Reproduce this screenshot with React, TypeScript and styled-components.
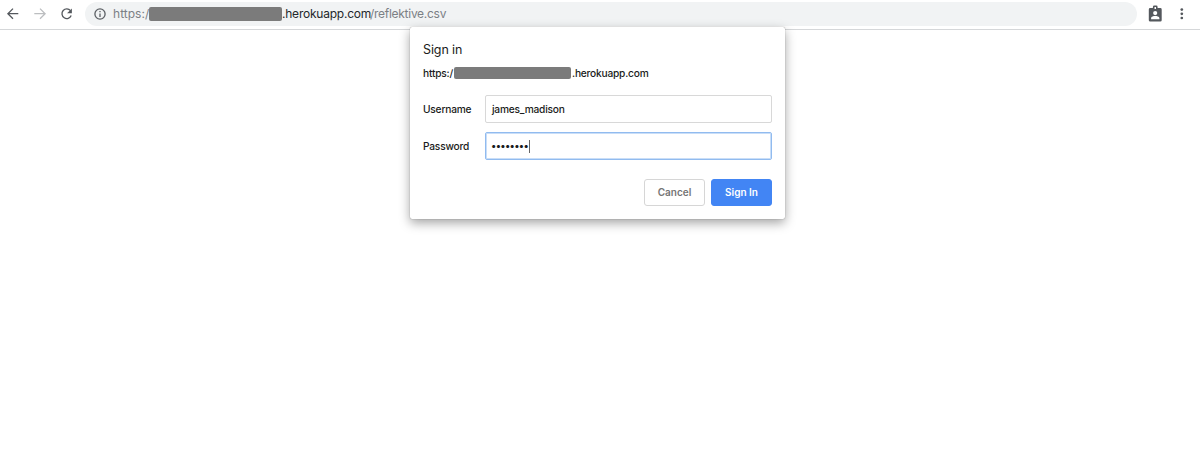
import React from "react";
import styled, { createGlobalStyle } from "styled-components";

const GlobalStyle = createGlobalStyle`
  * { box-sizing: border-box; }
  body { margin: 0; background: #fff; font-family: Inter, "Liberation Sans", sans-serif; }
`;

const Browser = styled.div`
  position: relative;
  height: 452px;
  overflow: hidden;
  background: #fff;
`;

const Toolbar = styled.header`
  display: flex;
  align-items: center;
  height: 30px;
  padding: 0 10px 3px 5px;
  border-bottom: 1px solid #d5d7d9;
`;

const NavButton = styled.span<{ $muted?: boolean }>`
  display: flex;
  width: 16px;
  height: 16px;
  margin: 1px 11px 0 0;
  color: ${(p) => (p.$muted ? "#bcbec0" : "#54585d")};
`;

const AddressBar = styled.div`
  display: flex;
  flex: 1;
  align-items: center;
  height: 24px;
  margin: 1px 10px 0 -1px;
  padding-left: 8px;
  border-radius: 12px;
  background: #f1f3f4;
  color: #5b5f64;
`;

const Address = styled.div`
  display: flex;
  align-items: center;
  margin-left: 6px;
  font-size: 12px;
  line-height: 16px;
  white-space: pre;
  color: #7c8085;
`;

const Scheme = styled.span`
  width: 36px;
  letter-spacing: 0.03px;
`;

const Host = styled.span`
  width: 88px;
  letter-spacing: -0.22px;
  color: #24272b;
`;

const Path = styled.span`
  letter-spacing: -0.28px;
`;

const Redacted = styled.span<{ $width: number; $height: number }>`
  width: ${(p) => p.$width}px;
  height: ${(p) => p.$height}px;
  border-radius: 2px;
  background: #7b7b7b;
`;

const Actions = styled.div`
  display: flex;
  align-items: center;
  gap: 10px;
  padding-top: 1px;
  color: #54585d;
`;

const Dialog = styled.section`
  position: absolute;
  left: 410px;
  top: 27px;
  width: 375px;
  height: 192px;
  padding: 14px 13px 13px;
  border-radius: 2px;
  background: #fff;
  color: #1a1c20;
  font-size: 10.2px;
  font-weight: 450;
  letter-spacing: -0.21px;
  box-shadow: 0 0 1px rgba(0, 0, 0, 0.5), 0 4px 11px rgba(0, 0, 0, 0.36);
`;

const Title = styled.h1`
  margin: 0;
  font-size: 12.5px;
  font-weight: 400;
  letter-spacing: -0.1px;
  line-height: 17px;
`;

const Origin = styled.div`
  display: flex;
  align-items: center;
  height: 14px;
  margin: 8px 0 15px;
`;

const OriginText = styled.span<{ $width?: number }>`
  width: ${(p) => (p.$width ? `${p.$width}px` : "auto")};
  padding-left: ${(p) => (p.$width ? 0 : 1)}px;
`;

const Field = styled.div`
  display: flex;
  align-items: center;
  height: 28px;
  margin-bottom: 9px;
`;

const Label = styled.span`
  width: 62px;
`;

const Input = styled.div<{ $focused?: boolean }>`
  display: flex;
  flex: 1;
  align-items: center;
  height: 28px;
  padding-left: ${(p) => (p.$focused ? 5 : 6)}px;
  border: 1px solid ${(p) => (p.$focused ? "#91bbef" : "#d8d8d8")};
  border-radius: 2px;
  box-shadow: ${(p) => (p.$focused ? "inset 0 0 0 1px #c9def8" : "none")};
`;

const Dots = styled.span`
  padding-bottom: 2px;
  font-size: 10px;
  letter-spacing: -0.7px;
`;

const Caret = styled.span`
  width: 1px;
  height: 13px;
  margin-left: 1px;
  background: #666;
`;

const Buttons = styled.div`
  display: flex;
  justify-content: flex-end;
  gap: 6px;
  margin-top: 19px;
`;

const Button = styled.button<{ $primary?: boolean }>`
  width: 61px;
  height: 27px;
  padding: 0 0 1px;
  border: 1px solid ${(p) => (p.$primary ? "#4285f4" : "#d6d6d6")};
  border-radius: 3px;
  background: ${(p) => (p.$primary ? "#4285f4" : "#fff")};
  color: ${(p) => (p.$primary ? "#fff" : "#757575")};
  font: 600 10px Inter, "Liberation Sans", sans-serif;
`;

const Icon = styled.svg`
  display: block;
  fill: none;
  stroke: currentColor;
  stroke-width: 1.3;
`;

const BackIcon = () => (
  <Icon width="16" height="16" viewBox="0 0 16 16">
    <path d="M13.3 7.7H3.2M8 2.6L2.9 7.7L8 12.8" />
  </Icon>
);

const ForwardIcon = () => (
  <Icon width="16" height="16" viewBox="0 0 16 16">
    <path d="M2.3 7.7H12.8M8 2.6L13.1 7.7L8 12.8" />
  </Icon>
);

const ReloadIcon = () => (
  <Icon width="16" height="16" viewBox="0.5 0 16 16">
    <path d="M12 4.7A4.8 4.8 0 1 0 12.7 9.6" />
    <path d="M13.4 2.4V7.2H8.6Z" fill="currentColor" stroke="none" />
  </Icon>
);

const InfoIcon = () => (
  <Icon width="14" height="14" viewBox="0 0 14 14">
    <circle cx="7" cy="7" r="5.1" />
    <path d="M7 6.4V10M7 4.1V5.3" />
  </Icon>
);

const BadgeIcon = () => (
  <Icon width="17" height="18" viewBox="0 0 17 18">
    <path
      fill="currentColor"
      stroke="none"
      fillRule="evenodd"
      d="M3.2 3.1H5.9V2Q5.9 0.6 7.3 0.6H9.2Q10.6 0.6 10.6 2V3.1H13.3Q14.7 3.1 14.7 4.5V15.2Q14.7 16.6 13.3 16.6H3.2Q1.8 16.6 1.8 15.2V4.5Q1.8 3.1 3.2 3.1ZM7.5 2.1V4.1H9V2.1ZM8.2 6A2.1 2.1 0 1 0 8.2 10.2A2.1 2.1 0 1 0 8.2 6ZM4.1 14.2H12.4V13.1C12.4 11.7 9.8 11.1 8.2 11.1S4.1 11.7 4.1 13.1Z"
    />
  </Icon>
);

const MoreIcon = () => (
  <Icon width="16" height="16" viewBox="0 0 16 16">
    <g fill="currentColor" stroke="none">
      <circle cx="7.8" cy="3.6" r="1.35" />
      <circle cx="7.8" cy="7.8" r="1.35" />
      <circle cx="7.8" cy="12" r="1.35" />
    </g>
  </Icon>
);

export default function App() {
  return (
    <Browser>
      <GlobalStyle />
      <Toolbar>
        <NavButton><BackIcon /></NavButton>
        <NavButton $muted><ForwardIcon /></NavButton>
        <NavButton><ReloadIcon /></NavButton>
        <AddressBar>
          <InfoIcon />
          <Address>
            <Scheme>https:/</Scheme>
            <Redacted $width={133} $height={14} />
            <Host>.herokuapp.com</Host>
            <Path>/reflektive.csv</Path>
          </Address>
        </AddressBar>
        <Actions>
          <BadgeIcon />
          <MoreIcon />
        </Actions>
      </Toolbar>
      <Dialog>
        <Title>Sign in</Title>
        <Origin>
          <OriginText $width={31}>https:/</OriginText>
          <Redacted $width={117} $height={12} />
          <OriginText>.herokuapp.com</OriginText>
        </Origin>
        <Field>
          <Label>Username</Label>
          <Input>james_madison</Input>
        </Field>
        <Field>
          <Label>Password</Label>
          <Input $focused>
            <Dots>••••••••</Dots>
            <Caret />
          </Input>
        </Field>
        <Buttons>
          <Button>Cancel</Button>
          <Button $primary>Sign In</Button>
        </Buttons>
      </Dialog>
    </Browser>
  );
}
